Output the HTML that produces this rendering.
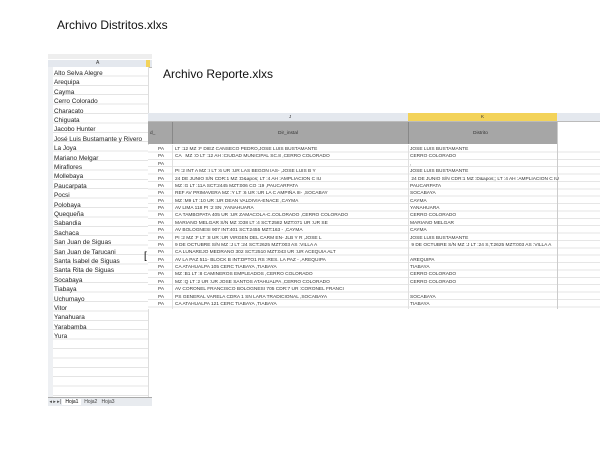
<html><head><style>
body{margin:0;width:600px;height:450px;background:#fff;font-family:"Liberation Sans",sans-serif;position:relative;overflow:hidden}
.a{position:absolute}
.t{font-size:12px;color:#111}
.l div{position:absolute;left:54px;font-size:6.4px;color:#222;white-space:nowrap}
.r div{position:absolute;font-size:4.8px;color:#333;white-space:nowrap}
</style></head><body>
<div class="a t" style="left:57px;top:18px">Archivo Distritos.xlxs</div>
<div class="a t" style="left:163px;top:67px">Archivo Reporte.xlxs</div>
<!-- left sheet -->
<div class="a" style="left:48px;top:54px;width:104px;height:5px;background:#eee"></div>
<div class="a" style="left:48px;top:60px;width:104px;height:7px;background:#e4e8ee;border-bottom:1px solid #bbb"></div>
<div class="a" style="left:146px;top:60px;width:4px;height:7px;background:#f3d35a"></div>
<div class="a" style="left:96px;top:60px;font-size:5px;color:#333">A</div>
<div class="a" style="left:48px;top:67px;width:5px;height:330px;background:#eef0f3;border-right:1px solid #ccc"></div>
<div class="a" style="left:148px;top:67px;width:1px;height:330px;background:#ddd"></div>
<div class="a" style="left:53px;top:67px;width:95px;height:330px;background:repeating-linear-gradient(#fff 0,#fff 8.4px,#e4e4e4 8.4px,#e4e4e4 9.4px)"></div>
<div class="l">
<div style="top:70px">Alto Selva Alegre</div><div style="top:79.4px">Arequipa</div><div style="top:88.8px">Cayma</div><div style="top:98.2px">Cerro Colorado</div><div style="top:107.6px">Characato</div><div style="top:117px">Chiguata</div><div style="top:126.4px">Jacobo Hunter</div><div style="top:135.8px">José Luis Bustamante y Rivero</div><div style="top:145.2px">La Joya</div><div style="top:154.6px">Mariano Melgar</div><div style="top:164px">Miraflores</div><div style="top:173.4px">Mollebaya</div><div style="top:182.8px">Paucarpata</div><div style="top:192.2px">Pocsi</div><div style="top:201.6px">Polobaya</div><div style="top:211px">Quequeña</div><div style="top:220.4px">Sabandia</div><div style="top:229.8px">Sachaca</div><div style="top:239.2px">San Juan de Siguas</div><div style="top:248.6px">San Juan de Tarucani</div><div style="top:258px">Santa Isabel de Siguas</div><div style="top:267.4px">Santa Rita de Siguas</div><div style="top:276.8px">Socabaya</div><div style="top:286.2px">Tiabaya</div><div style="top:295.6px">Uchumayo</div><div style="top:305px">Vitor</div><div style="top:314.4px">Yanahuara</div><div style="top:323.8px">Yarabamba</div><div style="top:333.2px">Yura</div>
</div>
<div class="a" style="left:144px;top:251px;font-size:10px">[</div>
<div class="a" style="left:48px;top:397px;width:104px;height:8px;background:#e8ebef;border-top:1px solid #aaa;font-size:5px;color:#444;line-height:8px">&nbsp;◂ ▸ ▸| <b style="font-weight:normal;background:#fff;padding:0 3px;color:#000">Hoja1</b>&nbsp; Hoja2 &nbsp; Hoja3</div>
<!-- right sheet -->
<div class="a" style="left:148px;top:113px;width:452px;height:8px;background:#e4e8ee;border-bottom:1px solid #bbb"></div>
<div class="a" style="left:408px;top:113px;width:149px;height:8px;background:#f3d35a"></div>
<div class="a" style="left:289px;top:114px;font-size:4.5px;color:#333">J</div>
<div class="a" style="left:481px;top:114px;font-size:4.5px;color:#333">K</div>
<div class="a" style="left:148px;top:122px;width:409px;height:22px;background:#a6a6a6"></div>
<div class="a" style="left:172px;top:122px;width:1px;height:22px;background:#888"></div>
<div class="a" style="left:408px;top:122px;width:1px;height:22px;background:#888"></div>
<div class="a" style="left:150px;top:131px;font-size:4.8px;color:#333">d_</div>
<div class="a" style="left:278px;top:131px;font-size:4.8px;color:#333">Dir_instal</div>
<div class="a" style="left:473px;top:131px;font-size:4.8px;color:#333">Distrito</div>
<div class="a" style="left:148px;top:145px;width:452px;height:164px;background:repeating-linear-gradient(#fff 0,#fff 6.4px,#e6e6e6 6.4px,#e6e6e6 7.38px)"></div>
<div class="a" style="left:172px;top:145px;width:1px;height:164px;background:#e0e0e0"></div>
<div class="a" style="left:408px;top:145px;width:1px;height:164px;background:#e0e0e0"></div>
<div class="a" style="left:557px;top:122px;width:1px;height:187px;background:#ccc"></div>
<div class="r">
<div style="left:158px;top:146px;line-height:7.38px">PA<br>PA<br>PA<br>PA<br>PA<br>PA<br>PA<br>PA<br>PA<br>PA<br>PA<br>PA<br>PA<br>PA<br>PA<br>PA<br>PA<br>PA<br>PA<br>PA<br>PA<br>PA</div>
<div style="left:175px;top:146px;line-height:7.38px">LT :12 MZ :F DIEZ CANSECO PEDRO,JOSE LUIS BUSTAMANTE<br>CA &nbsp; MZ :O LT :12 AH :CIUDAD MUNICIPAL SC.8 ,CERRO COLORADO<br>&nbsp;<br>PI :2 INT A MZ :I LT :6 UR :UR LAS BEGON IAS- ,JOSE LUIS B Y<br>24 DE JUNIO S/N CDR:1 MZ :D&amp;apos; LT :4 AH :AMPLIACION C IU<br>MZ :G LT :11A SCT:2445 MZT:006 CO :19 ,PAUCARPATA<br>REF AV PRIMAVERA MZ :Y LT :6 UR :UR LA C AMPIŃA III- ,SOCABAY<br>MZ :M9 LT :10 UR :UR DEAN VALDIVIA-ENACE ,CAYMA<br>AV LIMA 118 PI :2 SN ,YANAHUARA<br>CA TAMBOPATA 405 UR :UR ZAMACOLA-C.COLORADO ,CERRO COLORADO<br>MARIANO MELGAR S/N MZ :D38 LT :4 SCT:2582 MZT:071 UR :UR SE<br>AV BOLOGNESI 907 INT:401 SCT:2455 MZT:163 - ,CAYMA<br>PI :2 MZ :F LT :8 UR :UR VIRGEN DEL CARM EN- JLB Y R ,JOSE L<br>9 DE OCTUBRE S/N MZ :J LT :24 SCT:2625 MZT:003 AS :VILLA A<br>CA LUNAREJO MEDRANO 302 SCT:2510 MZT:043 UR :UR ACEQUIA ALT<br>AV LA PAZ 511- BLOCK B INT:DPTO1 RS :RES. LA PAZ - ,AREQUIPA<br>CA ATAHUALPA 105 CERC TIABAYA ,TIABAYA<br>MZ :B1 LT :8 CAMINEROS EMPLEADOS ,CERRO COLORADO<br>MZ :Q LT :2 UR :UR JOSE SANTOS ATAHUALPA ,CERRO COLORADO<br>AV CORONEL FRANCISCO BOLOGNESI 705 CDR:7 UR :CORONEL FRANCI<br>PS GENERAL VARELA CDRA 1 SN LARA TRADICIONAL ,SOCABAYA<br>CA ATAHUALPA 121 CERC TIABAYA ,TIABAYA</div>
<div style="left:410px;top:146px;line-height:7.38px">JOSE LUIS BUSTAMANTE<br>CERRO COLORADO<br>,<br>JOSE LUIS BUSTAMANTE<br>&nbsp;24 DE JUNIO S/N CDR:1 MZ :D&amp;apos;; LT :4 AH :AMPLIACION C IU<br>PAUCARPATA<br>SOCABAYA<br>CAYMA<br>YANAHUARA<br>CERRO COLORADO<br>MARIANO MELGAR<br>CAYMA<br>JOSE LUIS BUSTAMANTE<br>&nbsp;9 DE OCTUBRE S/N MZ :J LT :24 S,T:2625 MZT:003 AS :VILLA A<br>&nbsp;<br>AREQUIPA<br>TIABAYA<br>CERRO COLORADO<br>CERRO COLORADO<br>&nbsp;<br>SOCABAYA<br>TIABAYA</div>
</div>
</body></html>
